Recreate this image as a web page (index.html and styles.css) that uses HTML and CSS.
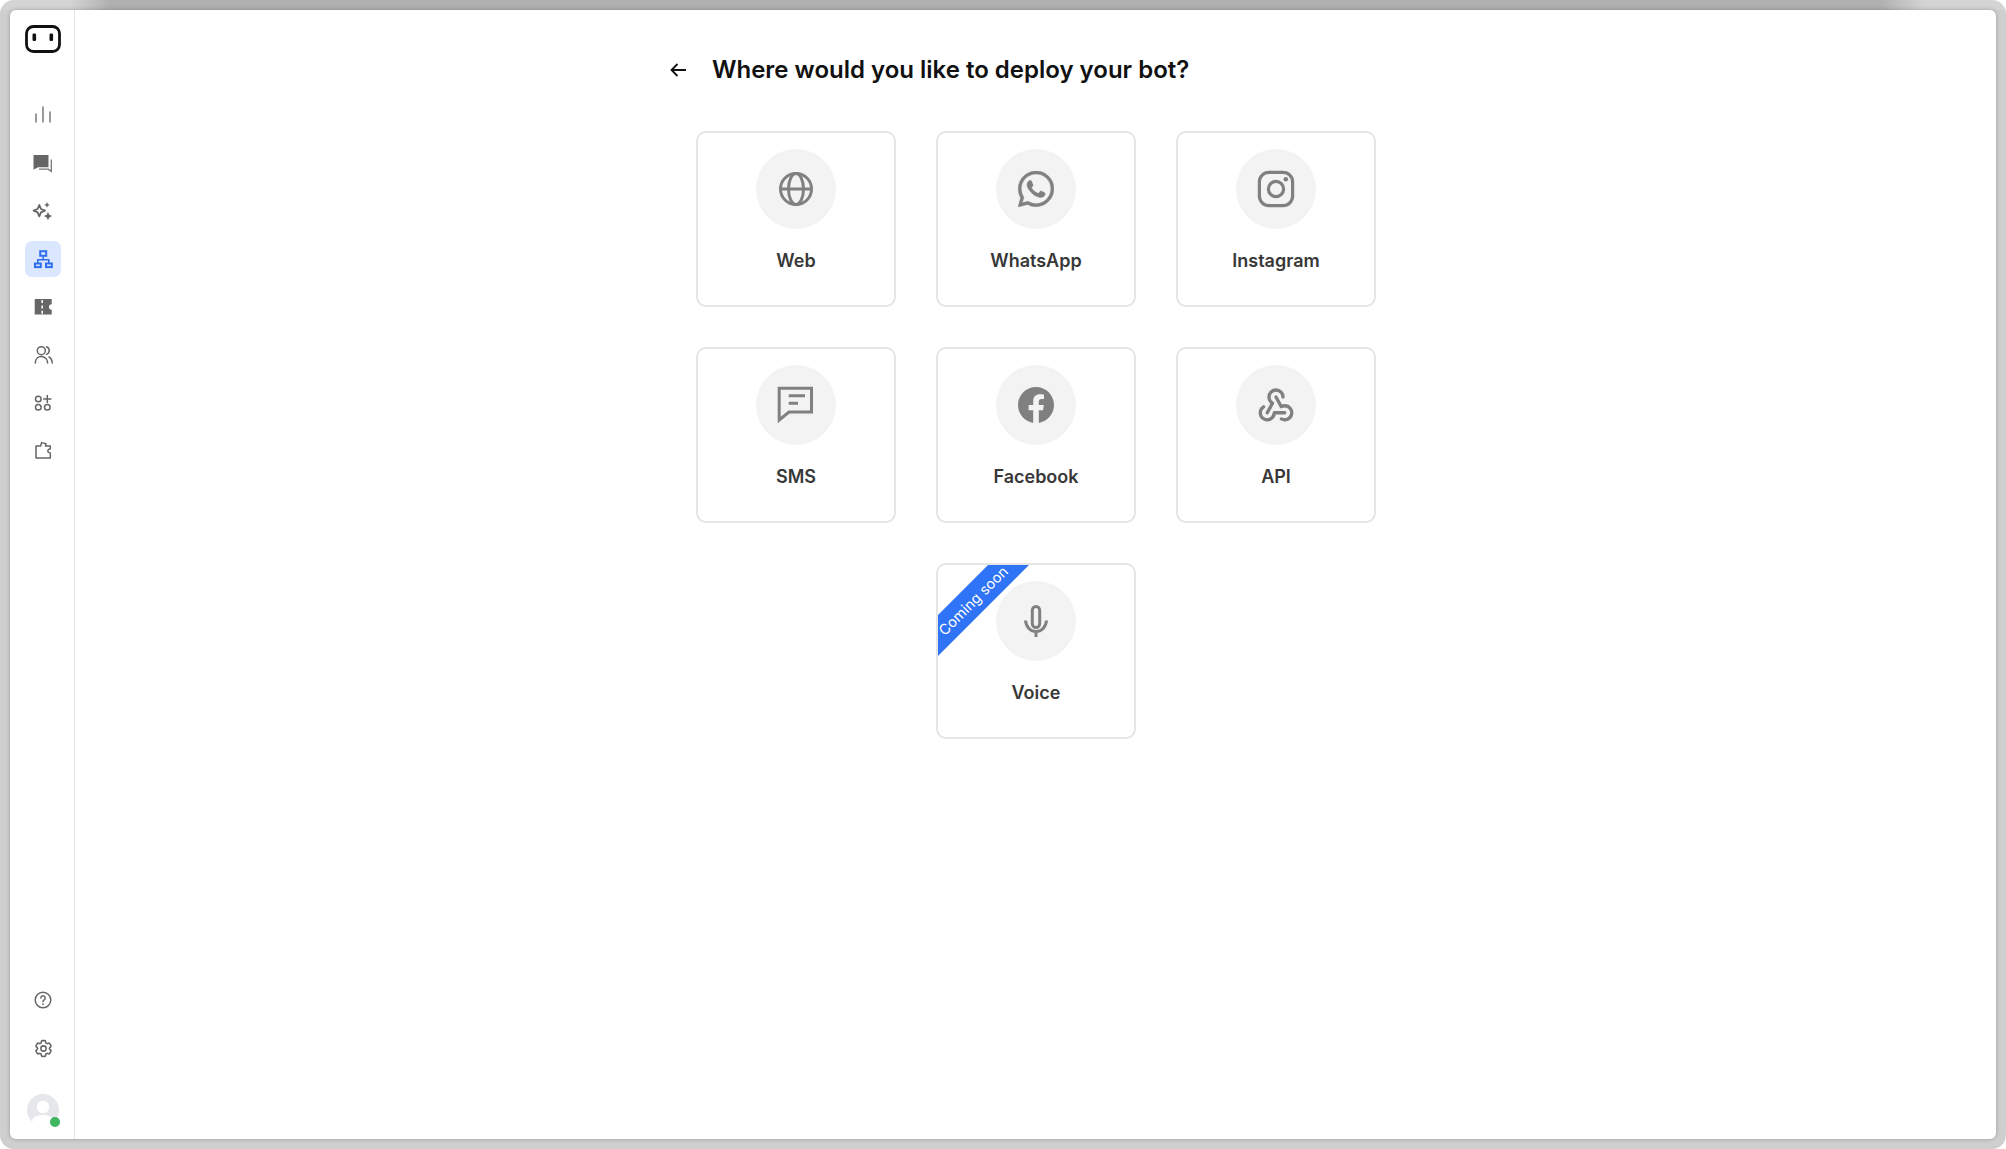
FILE: index.html
```html
<!DOCTYPE html>
<html lang="en">
<head>
  <meta charset="UTF-8">
  <meta name="viewport" content="width=device-width, initial-scale=1.0">
  <title>Deploy your bot</title>
  <link rel="stylesheet" href="styles.css">
</head>
<body>
  <div class="frame">
    <div class="window">
      <aside class="sidebar">
        <svg class="logo" viewBox="0 0 36 28" fill="none">
          <rect x="1.5" y="1.5" width="33" height="25" rx="7" stroke="#111" stroke-width="2.8"/>
          <rect x="7.5" y="8.5" width="3.6" height="7.5" rx="1.2" fill="#111"/>
          <rect x="24.5" y="8.5" width="3.6" height="7.5" rx="1.2" fill="#111"/>
        </svg>
        <nav class="nav">
          <a class="nav-item">
            <svg viewBox="0 0 24 24" fill="none" stroke="#808080" stroke-width="1.6"><path d="M5 10.5v9M12 3.5v16M19 8.5v11"/></svg>
          </a>
          <a class="nav-item">
            <svg viewBox="0 0 24 24" fill="none"><path d="M2.5 4h15v12.2H7l-4.5 2.5z" fill="#666"/><path d="M20.3 8.5v12l-3-2.3H8" stroke="#777" stroke-width="1.3"/></svg>
          </a>
          <a class="nav-item">
            <svg viewBox="0 0 24 24" fill="none"><path d="M8.3 6l1.7 4 4 1.7-4 1.7-1.700 4-1.700-4-4-1.700 4-1.700z" stroke="#666" stroke-width="1.8" stroke-linejoin="round"/><path d="M16 3l.9 2 2 .9-2 .9-.9 2-.9-2-2-.9 2-.9zM17 13l1.3 2.800 2.800 1.300-2.800 1.300-1.300 2.800-1.300-2.800-2.800-1.300 2.800-1.300z" fill="#666"/></svg>
          </a>
          <a class="nav-item active">
            <svg viewBox="0 0 24 24" fill="none" stroke="#2f6fed"><path d="M12.2 9.5v3.2M6.8 16v-3.3h11V16" stroke-width="1.6"/><rect x="9.2" y="4.2" width="6" height="4.6" stroke-width="2"/><rect x="4" y="16.5" width="5.8" height="3.6" stroke-width="2"/><rect x="15" y="16.5" width="5.8" height="3.6" stroke-width="2"/></svg>
          </a>
          <a class="nav-item">
            <svg viewBox="0 0 24 24"><path d="M3.7 4h17v5.3a2.700 2.700 0 0 0 0 5.400V19.500h-17z" fill="#666"/><path d="M11.2 5v14" stroke="#fff" stroke-width="1.6" stroke-dasharray="3 2.4" fill="none"/></svg>
          </a>
          <a class="nav-item nudge">
            <svg viewBox="0 0 24 24" fill="none" stroke="#666" stroke-width="1.5" stroke-linecap="round"><circle cx="10.3" cy="8.7" r="4"/><path d="M4.3 21c0-4 2.7-6.5 6-6.5s6.3 2.5 6.3 6.5M15.5 4.8a4 4 0 0 1 0 7.6M18 15c2 1 3 3 3.2 6"/></svg>
          </a>
          <a class="nav-item">
            <svg viewBox="0 0 24 24" fill="none" stroke="#666" stroke-width="1.5" stroke-linecap="round"><circle cx="7.3" cy="8" r="2.8"/><circle cx="7.3" cy="16.2" r="2.8"/><circle cx="16.3" cy="16.2" r="2.8"/><path d="M16.3 4.4v7.2M12.7 8h7.2"/></svg>
          </a>
          <a class="nav-item nudge">
            <svg viewBox="0 0 24 24" fill="none" stroke="#666" stroke-width="1.5" stroke-linejoin="round"><path d="M5 20V8h4.6l1-3.4 4.4 1.2-.6 2.2h4.9v3a1.9 1.9 0 0 0-1.2 3.6l1.2.4V20z"/></svg>
          </a>
        </nav>
        <div class="sidebar-bottom">
          <a class="nav-item">
            <svg viewBox="0 0 24 24" fill="none" stroke="#666" stroke-width="1.5" stroke-linecap="round"><circle cx="12" cy="12" r="7.8"/><path d="M9.8 10a2.2 2.2 0 1 1 3.4 1.9c-.8.5-1.2 1-1.2 1.8"/><path d="M12 16.2v.1" stroke-width="1.7"/></svg>
          </a>
          <a class="nav-item">
            <svg class="gear" viewBox="0 0 24 24" fill="none" stroke="#666" stroke-width="1.8"><path d="M9.594 3.94c.09-.542.56-.94 1.11-.94h2.593c.55 0 1.02.398 1.11.94l.213 1.281c.063.374.313.686.645.87.074.04.147.083.22.127.324.196.72.257 1.075.124l1.217-.456a1.125 1.125 0 011.37.49l1.296 2.247a1.125 1.125 0 01-.26 1.431l-1.003.827c-.293.24-.438.613-.431.992a6.759 6.759 0 010 .255c-.007.378.138.75.43.99l1.005.828c.424.35.534.954.26 1.43l-1.298 2.247a1.125 1.125 0 01-1.369.491l-1.217-.456c-.355-.133-.75-.072-1.076.124a6.57 6.57 0 01-.22.128c-.331.183-.581.495-.644.869l-.213 1.28c-.09.543-.56.941-1.11.941h-2.594c-.55 0-1.02-.398-1.11-.94l-.213-1.281c-.062-.374-.312-.686-.644-.87a6.52 6.52 0 01-.22-.127c-.325-.196-.72-.257-1.076-.124l-1.217.456a1.125 1.125 0 01-1.369-.49l-1.297-2.247a1.125 1.125 0 01.26-1.431l1.004-.827c.292-.24.437-.613.43-.992a6.932 6.932 0 010-.255c.007-.378-.138-.75-.43-.99l-1.004-.828a1.125 1.125 0 01-.26-1.43l1.297-2.247a1.125 1.125 0 011.37-.491l1.216.456c.356.133.751.072 1.076-.124.072-.044.146-.087.22-.128.332-.183.582-.495.644-.869l.214-1.281z"/><circle cx="12" cy="12" r="3"/></svg>
          </a>
          <div class="avatar">
            <svg viewBox="0 0 32 32"><defs><clipPath id="avatarClip"><circle cx="16" cy="16" r="16"/></clipPath></defs><g clip-path="url(#avatarClip)"><rect width="32" height="32" fill="#e5e7eb"/><circle cx="16" cy="13" r="6.2" fill="#fff"/><ellipse cx="16" cy="27" rx="11" ry="6" fill="#fff"/></g></svg>
            <span class="status-dot"></span>
          </div>
        </div>
      </aside>

      <main class="main">
        <div class="deploy">
          <div class="deploy-head">
            <svg class="back" viewBox="0 0 24 24" fill="none" stroke="#111" stroke-width="1.8"><path d="M20 12H5.5M11.5 6l-6 6 6 6"/></svg>
            <h1>Where would you like to deploy your bot?</h1>
          </div>
          <div class="channels">
            <div class="card">
              <div class="card-icon">
                <svg viewBox="0 0 40 40" fill="none" stroke="#808080" stroke-width="3"><circle cx="20" cy="20" r="15.5"/><ellipse cx="20" cy="20" rx="7.5" ry="15.5"/><path d="M4.5 20h31"/></svg>
              </div>
              <span>Web</span>
            </div>
            <div class="card">
              <div class="card-icon">
                <svg class="icon-brand" viewBox="0 0 24 24" fill="#808080" stroke="#808080" stroke-width="0.3"><path d="M17.472 14.382c-.297-.149-1.758-.867-2.03-.967-.273-.099-.471-.148-.67.15-.197.297-.767.966-.94 1.164-.173.199-.347.223-.644.075-.297-.15-1.255-.463-2.39-1.475-.883-.788-1.48-1.761-1.653-2.059-.173-.297-.018-.458.13-.606.134-.133.298-.347.446-.52.149-.174.198-.298.298-.497.099-.198.05-.371-.025-.52-.075-.149-.669-1.612-.916-2.207-.242-.579-.487-.5-.669-.51-.173-.008-.371-.01-.57-.01-.198 0-.52.074-.792.372-.272.297-1.04 1.016-1.04 2.479 0 1.462 1.065 2.875 1.213 3.074.149.198 2.096 3.2 5.077 4.487.709.306 1.262.489 1.694.625.712.227 1.36.195 1.871.118.571-.085 1.758-.719 2.006-1.413.248-.694.248-1.289.173-1.413-.074-.124-.272-.198-.57-.347m-5.421 7.403h-.004a9.87 9.87 0 01-5.031-1.378l-.361-.214-3.741.982.998-3.648-.235-.374a9.86 9.86 0 01-1.51-5.26c.001-5.45 4.436-9.884 9.888-9.884 2.64 0 5.122 1.03 6.988 2.898a9.825 9.825 0 012.893 6.994c-.003 5.45-4.437 9.884-9.885 9.884m8.413-18.297A11.815 11.815 0 0012.05 0C5.495 0 .16 5.335.157 11.892c0 2.096.547 4.142 1.588 5.945L.057 24l6.305-1.654a11.882 11.882 0 005.683 1.448h.005c6.554 0 11.89-5.335 11.893-11.893a11.821 11.821 0 00-3.48-8.413Z"/></svg>
              </div>
              <span>WhatsApp</span>
            </div>
            <div class="card">
              <div class="card-icon">
                <svg viewBox="0 0 40 40" fill="none" stroke="#808080" stroke-width="3.2"><rect x="3.4" y="3.4" width="33.2" height="33.2" rx="9.5"/><circle cx="20" cy="20" r="7.6"/><circle cx="29.8" cy="10.2" r="2.3" fill="#808080" stroke="none"/></svg>
              </div>
              <span>Instagram</span>
            </div>
            <div class="card">
              <div class="card-icon">
                <svg viewBox="0 0 40 40" fill="none" stroke="#808080" stroke-width="3"><path d="M3.2 3.2h32.3V27H13l-9.8 8z"/><path d="M12.7 10.7H29M12.7 18.3H22"/></svg>
              </div>
              <span>SMS</span>
            </div>
            <div class="card">
              <div class="card-icon">
                <svg class="icon-brand" viewBox="0 0 24 24" fill="#808080"><path d="M24 12.073c0-6.627-5.373-12-12-12s-12 5.373-12 12c0 5.99 4.388 10.954 10.125 11.854v-8.385H7.078v-3.47h3.047V9.43c0-3.007 1.792-4.669 4.533-4.669 1.312 0 2.686.235 2.686.235v2.953H15.83c-1.491 0-1.956.925-1.956 1.874v2.25h3.328l-.532 3.47h-2.796v8.385C19.612 23.027 24 18.062 24 12.073z"/></svg>
              </div>
              <span>Facebook</span>
            </div>
            <div class="card">
              <div class="card-icon">
                <svg class="icon-hook" viewBox="0 0 24 24" fill="none" stroke="#808080" stroke-width="1.9" stroke-linecap="round" stroke-linejoin="round"><path d="M4.876 13.61a4 4 0 1 0 6.124 3.39h6"/><path d="M15.066 20.502a4 4 0 1 0 1.934-7.502c-.706 0-1.424.179-2 .5l-3-5.5"/><path d="M16 8a4 4 0 1 0-8 0c0 1.506.77 2.818 2 3.5l-3 5.5"/></svg>
              </div>
              <span>API</span>
            </div>
            <div class="card card-voice">
              <div class="ribbon">Coming soon</div>
              <div class="card-icon">
                <svg viewBox="0 0 40 40" fill="none" stroke="#808080" stroke-width="3"><rect x="16.3" y="5.5" width="7.4" height="21" rx="3.7"/><path d="M9.5 19.5c.5 6.5 5 11 10.5 11s10-4.5 10.500-11M20 30v6"/></svg>
              </div>
              <span>Voice</span>
            </div>
          </div>
        </div>
      </main>
    </div>
  </div>
</body>
</html>
```

FILE: styles.css
```css
* {
  box-sizing: border-box;
}
body {
  margin: 0;
  background: #fff;
  font-family: Inter, "Liberation Sans", sans-serif;
  overflow: hidden;
}
.frame {
  height: 100vh;
  padding: 10px;
  border-radius: 14px;
  background:
    linear-gradient(to right, #d4d4d4 70px, #b0b0b0 110px, #b0b0b0 1880px, #d4d4d4 1925px) top / 100% 10px no-repeat,
    #cfcfcf;
}
.window {
  display: flex;
  height: 100%;
  background: #fff;
  border-radius: 6px;
  overflow: hidden;
  box-shadow: 0 0 4px rgba(0, 0, 0, 0.25);
}
.sidebar {
  width: 65px;
  flex-shrink: 0;
  display: flex;
  flex-direction: column;
  align-items: center;
  padding: 15px 0 13px 2px;
  border-right: 1px solid #e5e5e5;
}
.logo {
  width: 36px;
  height: 28px;
  flex-shrink: 0;
  margin-bottom: 44px;
}
.nav,
.sidebar-bottom {
  display: flex;
  flex-direction: column;
  align-items: center;
  gap: 12px;
}
.sidebar-bottom {
  margin-top: auto;
}
.nav-item {
  width: 36px;
  height: 36px;
  display: flex;
  align-items: center;
  justify-content: center;
  border-radius: 7px;
}
.nav-item svg {
  width: 24px;
  height: 24px;
}
.nav-item svg.gear {
  width: 21px;
  height: 21px;
}
.nav-item.nudge svg {
  margin-bottom: 2px;
}
.nav-item.active {
  background: #dbe7fe;
}
.avatar {
  position: relative;
  width: 32px;
  height: 32px;
  margin-top: 16px;
}
.avatar svg {
  display: block;
  width: 32px;
  height: 32px;
}
.status-dot {
  position: absolute;
  right: -1px;
  bottom: -1px;
  width: 10px;
  height: 10px;
  border-radius: 50%;
  background: #3fb660;
}
.main {
  flex: 1;
  display: flex;
  justify-content: center;
  padding: 44px 0 0 1px;
}
.deploy {
  width: 740px;
}
.deploy-head {
  display: flex;
  align-items: center;
  gap: 22px;
  height: 32px;
  margin-bottom: 45px;
}
.back {
  width: 24px;
  height: 24px;
}
.deploy-head h1 {
  margin: 0;
  font-size: 24px;
  line-height: 32px;
  font-weight: 600;
  color: #111;
}
.channels {
  display: grid;
  grid-template-columns: repeat(3, 200px);
  grid-auto-rows: 176px;
  gap: 40px;
  justify-content: center;
}
.card {
  position: relative;
  display: flex;
  flex-direction: column;
  align-items: center;
  padding-top: 16px;
  border: 2px solid #e5e5e5;
  border-radius: 10px;
  overflow: hidden;
  font-size: 18px;
  line-height: 24px;
  font-weight: 600;
  color: #383838;
}
.card-voice {
  grid-column: 2;
}
.card-icon {
  width: 80px;
  height: 80px;
  margin-bottom: 20px;
  display: flex;
  align-items: center;
  justify-content: center;
  border-radius: 50%;
  background: #f3f3f3;
}
.card-icon svg {
  width: 40px;
  height: 40px;
}
.card-icon svg.icon-brand {
  width: 36px;
  height: 36px;
}
.card-icon svg.icon-hook {
  width: 42px;
  height: 42px;
  margin-bottom: 2px;
}
.ribbon {
  position: absolute;
  top: 21px;
  left: -45px;
  width: 160px;
  height: 29px;
  background: #2f73f6;
  color: #fff;
  font-size: 14.5px;
  font-weight: 400;
  line-height: 29px;
  text-align: center;
  transform: rotate(-45deg);
}
```
